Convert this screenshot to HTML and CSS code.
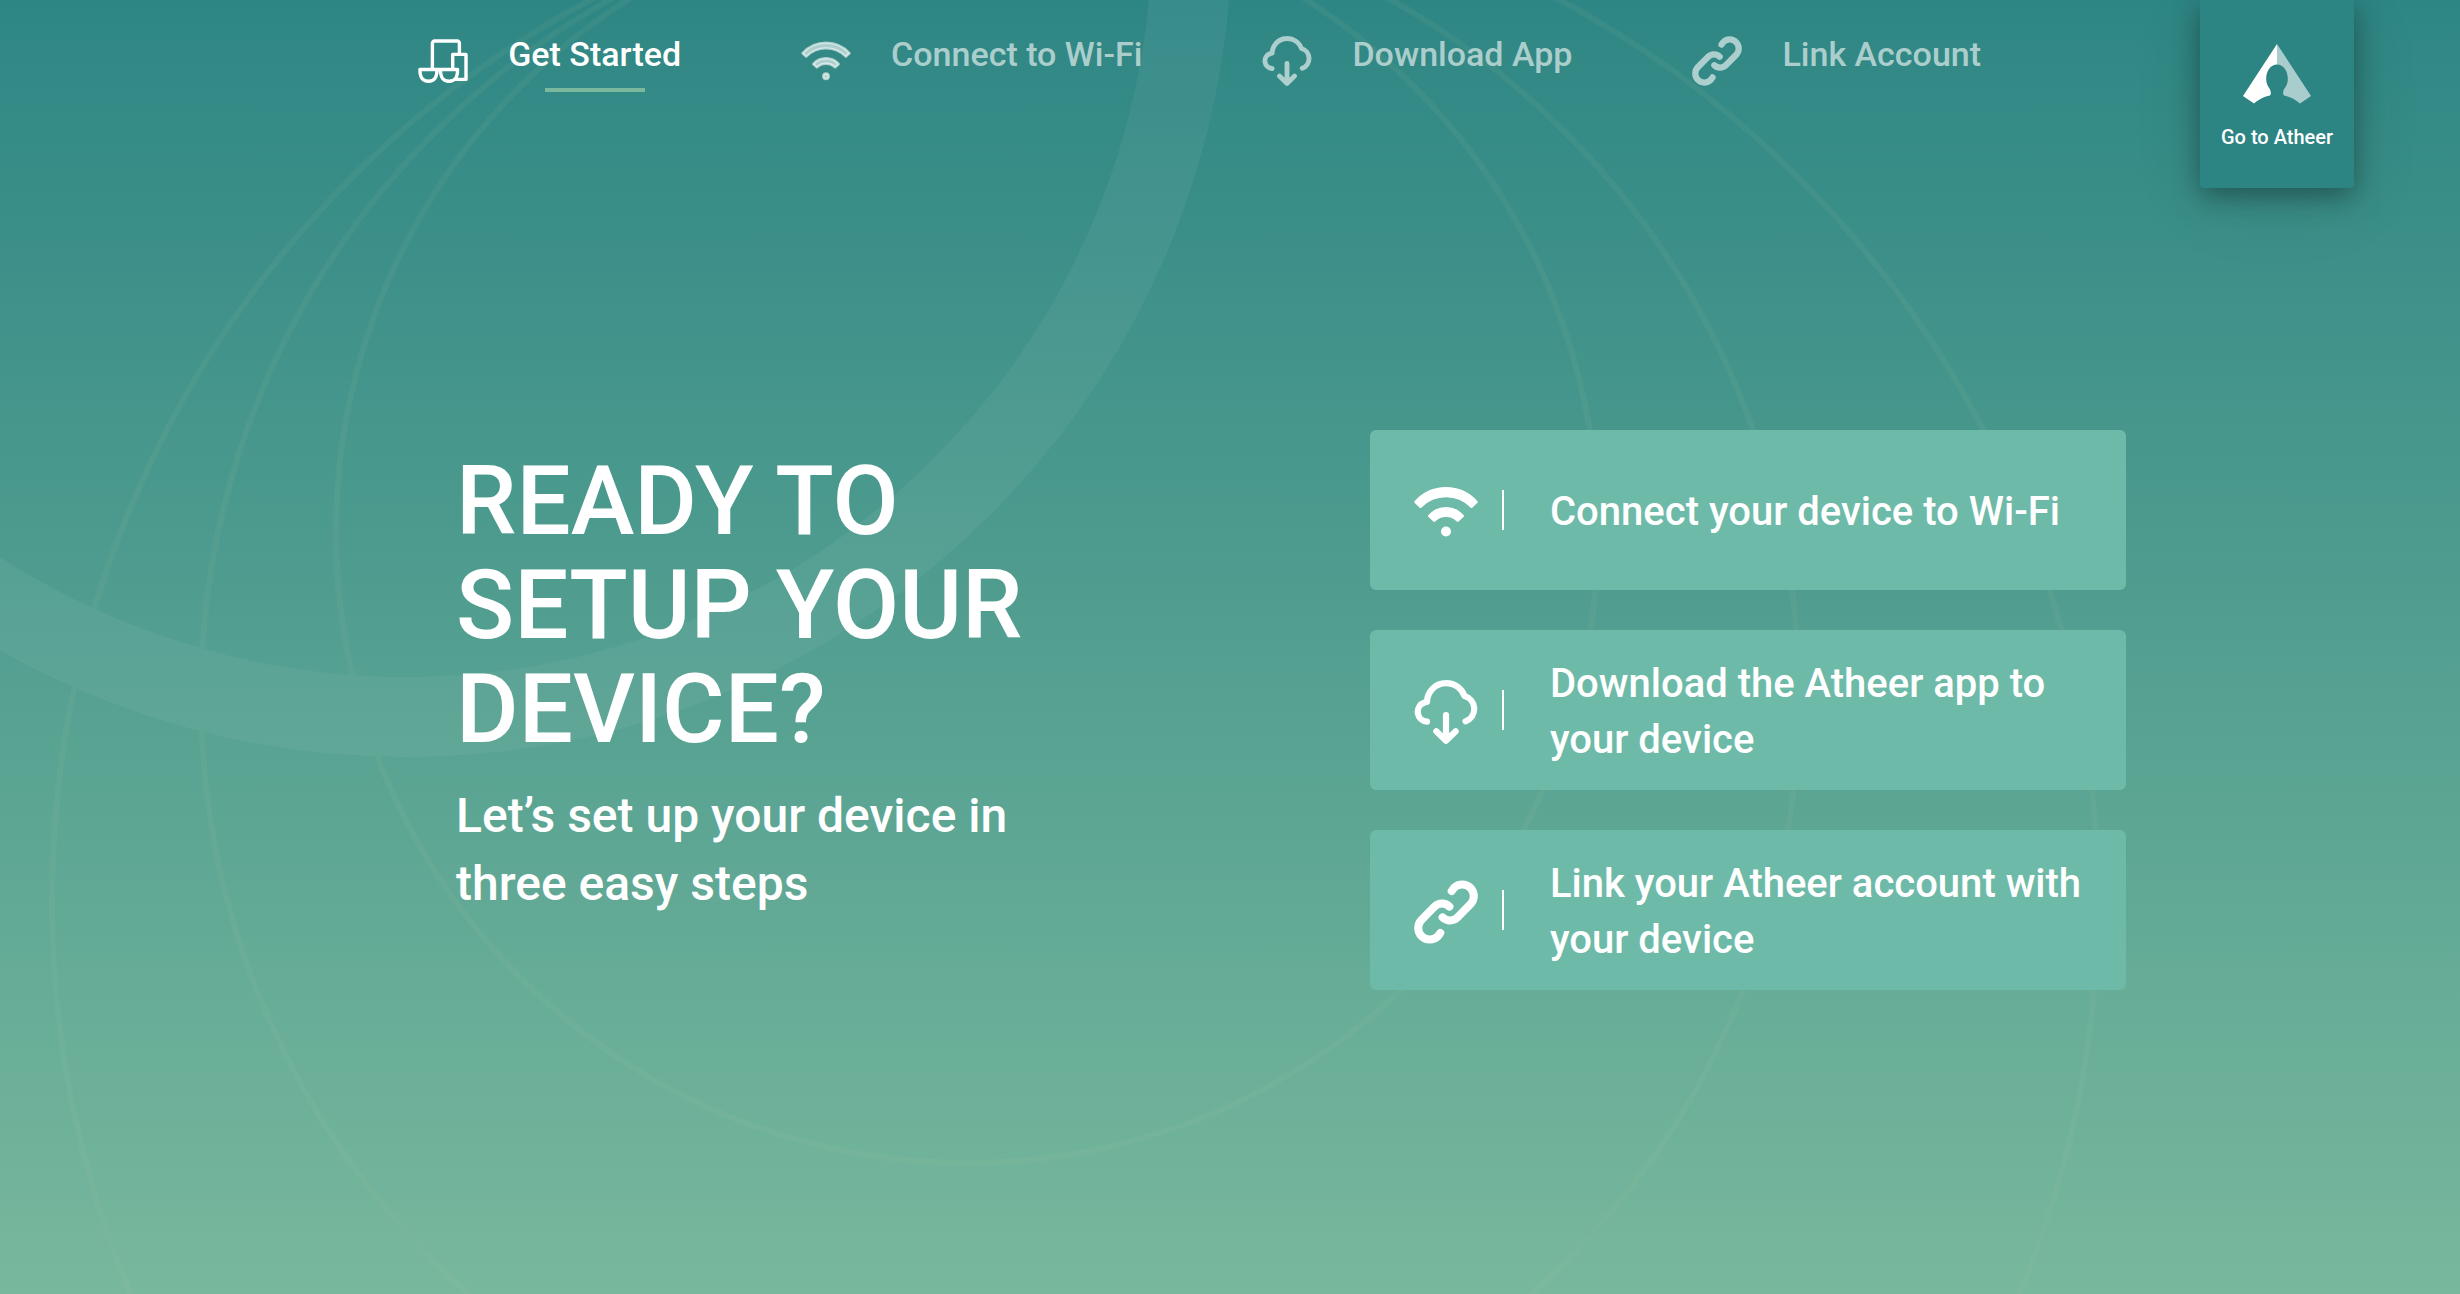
FILE: index.html
```html
<!DOCTYPE html>
<html lang="en">
<head>
<meta charset="UTF-8">
<meta name="viewport" content="width=device-width, initial-scale=1.0">
<title>Atheer Setup</title>
<link rel="stylesheet" href="styles.css">
</head>
<body>
<!-- background rings -->
<svg class="rings" viewBox="0 0 2460 1294" preserveAspectRatio="xMidYMin slice" aria-hidden="true">
    <mask id="band">
        <rect width="2460" height="1294" fill="#fff"/>
        <circle cx="406" cy="-69" r="786" fill="none" stroke="#000" stroke-width="80"/>
    </mask>
    <circle class="ring-thick" cx="406" cy="-69" r="786"/>
    <g mask="url(#band)">
        <circle class="ring" cx="967" cy="532" r="631"/>
        <circle class="ring" cx="1000" cy="697" r="799"/>
        <circle class="ring" cx="1075" cy="901" r="1023"/>
    </g>
</svg>
<!-- shared icons -->
<svg class="sprite" aria-hidden="true">
    <symbol id="devices" viewBox="0 0 50 50">
        <g fill="none" stroke="currentColor" stroke-width="3.4" stroke-linejoin="round">
            <path d="M14.4 33V7.2a2.2 2.2 0 0 1 2.2-2.2H39.2a2.2 2.2 0 0 1 2.2 2.2V18"/>
            <path d="M34.7 33V18.4H48V43.4H37"/>
            <path d="M1.9 33.5H19C19 41 17 45.2 10.5 45.2S1.9 41 1.9 33.5ZM22.5 33.5H39.6C39.6 41 37.6 45.2 31 45.2S22.5 41 22.5 33.5ZM18 33.5H23"/>
        </g>
    </symbol>
    <symbol id="wifi" viewBox="0 0 64 64">
        <g fill="currentColor" stroke="currentColor" stroke-width="3" stroke-linejoin="round">
            <path d="M1.8 22A40.5 40.5 0 0 1 62.2 22L57.5 26.5A35.7 35.7 0 0 0 6.5 26.5Z"/>
            <path d="M15.6 36A21.7 21.7 0 0 1 48.4 36L43.7 40.3A16.7 16.7 0 0 0 20.3 40.3Z"/>
            <circle cx="32" cy="51.5" r="3.5"/>
        </g>
    </symbol>
    <symbol id="cloud" viewBox="0 0 64 64">
        <g fill="none" stroke="currentColor" stroke-width="6.2" stroke-linecap="round" stroke-linejoin="round">
            <path d="M13 41.6A9.8 9.8 0 0 1 10.500 22.5L13 22A19 19 0 0 1 32 3.200A19 19 0 0 1 50.500 16A13.3 13.3 0 0 1 51.5 41.3"/>
            <path d="M32 35V60.5M22.3 51.3L32 60.7L41.7 51.3"/>
        </g>
    </symbol>
    <symbol id="chain" viewBox="0 0 64 64">
        <g fill="none" stroke="currentColor" stroke-width="8" stroke-linecap="round" stroke-linejoin="round">
            <path d="M37.7 11L40.2 7.6A11.6 11.6 0 0 1 56.6 24L43.6 37.2A10.6 10.6 0 0 1 28.6 37.4"/>
            <path d="M37.7 11L40.2 7.6A11.6 11.6 0 0 1 56.6 24L43.6 37.2A10.6 10.6 0 0 1 28.6 37.4" transform="rotate(180 32 32)"/>
        </g>
    </symbol>
</svg>

<header class="header">
    <nav class="nav">
        <a href="#start" class="nav-item active">
            <svg class="nav-icon"><use href="#devices"/></svg>
            <span class="nav-text">Get Started</span>
        </a>
        <a href="#wifi-setup" class="nav-item">
            <svg class="nav-icon"><use href="#wifi"/></svg>
            <span class="nav-text">Connect to Wi-Fi</span>
        </a>
        <a href="#download" class="nav-item">
            <svg class="nav-icon"><use href="#cloud"/></svg>
            <span class="nav-text">Download App</span>
        </a>
        <a href="#link" class="nav-item">
            <svg class="nav-icon"><use href="#chain"/></svg>
            <span class="nav-text">Link Account</span>
        </a>
    </nav>
    <a href="#atheer" class="go">
        <svg class="logo" viewBox="0 0 68 60" aria-hidden="true">
            <path fill="#fff" d="M34 0L0 52L11 59.5Q18.5 53 27 51.5C28.4 50 28 47 26.5 44.5C24.5 42 23.2 39 23.2 35C23.2 27 27.5 20.5 34 20.5Z"/>
            <path fill="#a9cdcd" d="M34 0L68 52L57 59.5Q49.5 53 41 51.5C39.6 50 40 47 41.5 44.5C43.5 42 44.8 39 44.8 35C44.8 27 40.5 20.5 34 20.5Z"/>
        </svg>
        <span>Go to Atheer</span>
    </a>
</header>

<main class="main" id="start">
    <div class="intro">
        <h1>READY TO SETUP YOUR DEVICE?</h1>
        <p>Let’s set up your device in three easy steps</p>
    </div>
    <div class="steps">
        <a href="#wifi-setup" class="step">
            <svg class="step-icon"><use href="#wifi"/></svg>
            <span class="step-text">Connect your device to Wi-Fi</span>
        </a>
        <a href="#download" class="step">
            <svg class="step-icon"><use href="#cloud"/></svg>
            <span class="step-text">Download the Atheer app to your device</span>
        </a>
        <a href="#link" class="step">
            <svg class="step-icon"><use href="#chain"/></svg>
            <span class="step-text">Link your Atheer account with your device</span>
        </a>
    </div>
</main>
</body>
</html>
```
FILE: styles.css
```css
* {box-sizing: border-box;}
body {margin: 0;min-height: 100vh;position: relative;background: linear-gradient(#2e8684, #78b89d);font-family: Roboto, "Liberation Sans", sans-serif;font-weight: 500;color: #fff;}
a {color: inherit;text-decoration: none;}
h1, p {margin: 0;font-weight: 500;}
.sprite {display: none;}

.rings {position: absolute;left: 0;top: 0;z-index: -1;width: 100%;height: 100%;}
.ring-thick {fill: none;stroke: #fff;stroke-width: 80;stroke-opacity: .05;}
.ring {fill: none;stroke: #b4cfaa;stroke-width: 6;stroke-opacity: .08;}

.header {display: flex;justify-content: space-between;align-items: flex-start;padding: 0 106px 0 17%;}
.nav {display: flex;gap: 120px;padding-top: 20px;}
.nav-item {display: flex;gap: 40px;color: rgba(255, 255, 255, .6);}
.nav-item.active {color: #fff;}
.nav-icon {width: 50px;height: 50px;margin-top: 16px;flex: none;}
.nav-text {font-size: 34px;line-height: 68px;white-space: nowrap;}
.nav-text::after {content: "";display: block;width: 100px;height: 4px;margin: 0 auto;}
.active .nav-text::after {background: #7ab99e;}

.go {display: flex;flex-direction: column;align-items: center;width: 154px;height: 188px;padding-top: 44px;border-radius: 0 0 4px 4px;background: #2c8483;box-shadow: 0 8px 28px rgba(0, 0, 0, .36), 0 16px 76px rgba(0, 0, 0, .08);font-size: 20px;line-height: 24px;}
.logo {width: 68px;height: 60px;margin-bottom: 21px;}

.main {display: flex;justify-content: space-between;align-items: flex-start;max-width: 1792px;margin: 0 auto;padding: 242px 0 80px 122px;}
.intro {max-width: 600px;padding-top: 19px;}
.intro h1 {font-size: 96px;line-height: 104px;}
.intro p {margin-top: 21px;font-size: 48px;line-height: 68px;}
.steps {display: flex;flex-direction: column;gap: 40px;width: 756px;}
.step {display: flex;align-items: center;min-height: 160px;padding: 0 40px 0 44px;border-radius: 6px;background: #6ebaa8;}
.step-icon {width: 64px;height: 64px;margin-top: 4px;flex: none;}
.step::before {content: "";order: 1;flex: none;width: 2px;height: 40px;margin: 0 46px 0 24px;background: #fff;}
.step-text {order: 2;margin-top: 3px;font-size: 40px;line-height: 56px;}
```
